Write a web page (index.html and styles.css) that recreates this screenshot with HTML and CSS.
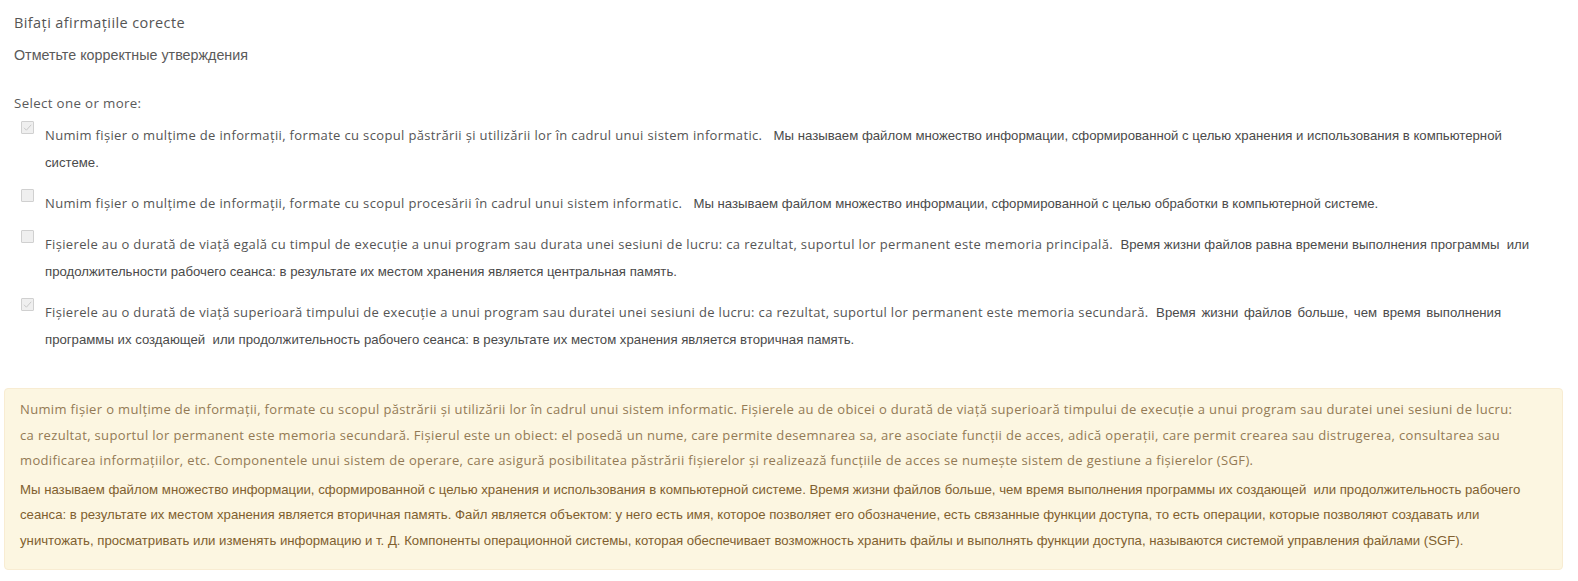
FILE: index.html
```html
<!DOCTYPE html>
<html lang="ro">
<head>
<meta charset="utf-8">
<title>Întrebare</title>
<link rel="stylesheet" href="styles.css">
</head>
<body>
<div class="question">
  <div class="qtext">
    <p class="qt-ro">Bifați afirmațiile corecte</p>
    <p class="qt-ru">Отметьте корректные утверждения</p>
  </div>
  <div class="prompt">Select one or more:</div>
  <div class="answers">
    <div class="option">
      <span class="check"><svg viewBox="0 0 13 13" width="13" height="13"><path d="M3 6.8 L5.4 9.2 L10.2 3.8" fill="none" stroke="#c9c9c9" stroke-width="1"/></svg></span>
      <div class="otext"><span class="ro">Numim fişier o mulţime de informaţii, formate cu scopul păstrării şi utilizării lor în cadrul unui sistem informatic.&nbsp;&nbsp; </span><span class="ru">Мы называем файлом множество информации, сформированной с целью хранения и использования в компьютерной</span><br><span class="ru">системе.</span></div>
    </div>
    <div class="option">
      <span class="check"></span>
      <div class="otext"><span class="ro">Numim fişier o mulţime de informaţii, formate cu scopul procesării în cadrul unui sistem informatic.&nbsp;&nbsp; </span><span class="ru">Мы называем файлом множество информации, сформированной с целью обработки в компьютерной системе.</span></div>
    </div>
    <div class="option">
      <span class="check"></span>
      <div class="otext"><span class="ro">Fişierele au o durată de viaţă egală cu timpul de execuţie a unui program sau durata unei sesiuni de lucru: ca rezultat, suportul lor permanent este memoria principală.&nbsp; </span><span class="ru">Время жизни файлов равна времени выполнения программы &nbsp;или</span><br><span class="ru">продолжительности рабочего сеанса: в результате их местом хранения является центральная память.</span></div>
    </div>
    <div class="option">
      <span class="check"><svg viewBox="0 0 13 13" width="13" height="13"><path d="M3 6.8 L5.4 9.2 L10.2 3.8" fill="none" stroke="#c9c9c9" stroke-width="1"/></svg></span>
      <div class="otext"><span class="ro">Fişierele au o durată de viaţă superioară timpului de execuţie a unui program sau duratei unei sesiuni de lucru: ca rezultat, suportul lor permanent este memoria secundară.&nbsp; </span><span class="ru wide">Время жизни файлов больше, чем время выполнения</span><br><span class="ru">программы их создающей &nbsp;или продолжительность рабочего сеанса: в результате их местом хранения является вторичная память.</span></div>
    </div>
  </div>
</div>
<div class="feedback">
  <p class="ro">Numim fişier o mulţime de informaţii, formate cu scopul păstrării şi utilizării lor în cadrul unui sistem informatic. Fişierele au de obicei o durată de viaţă superioară timpului de execuţie a unui program sau duratei unei sesiuni de lucru:<br>ca rezultat, suportul lor permanent este memoria secundară. Fişierul este un obiect: el posedă un nume, care permite desemnarea sa, are asociate funcţii de acces, adică operaţii, care permit crearea sau distrugerea, consultarea sau<br>modificarea informaţiilor, etc. Componentele unui sistem de operare, care asigură posibilitatea păstrării fişierelor şi realizează funcţiile de acces se numeşte sistem de gestiune a fişierelor (SGF).</p>
  <p class="ru">Мы называем файлом множество информации, сформированной с целью хранения и использования в компьютерной системе. Время жизни файлов больше, чем время выполнения программы их создающей &nbsp;или продолжительность рабочего<br>сеанса: в результате их местом хранения является вторичная память. Файл является объектом: у него есть имя, которое позволяет его обозначение, есть связанные функции доступа, то есть операции, которые позволяют создавать или<br>уничтожать, просматривать или изменять информацию и т. Д. Компоненты операционной системы, которая обеспечивает возможность хранить файлы и выполнять функции доступа, называются системой управления файлами (SGF).</p>
</div>
</body>
</html>
```
FILE: styles.css
```css
html, body {
  margin: 0;
  padding: 0;
  background: #ffffff;
}
body {
  font-family: "Open Sans", "Liberation Sans", sans-serif;
  color: #555555;
}
.ro {
  font-family: "Open Sans", "Liberation Sans", sans-serif;
  letter-spacing: 0.35px;
}
.ru {
  font-family: "Liberation Sans", Arial, sans-serif;
  letter-spacing: 0;
  font-size: 13.2px;
}
.ru.wide {
  word-spacing: 2px;
}
.question {
  padding: 13px 14px 0 14px;
}
.qtext p {
  margin: 0;
  line-height: 20px;
}
.qt-ro {
  font-family: "Open Sans", sans-serif;
  font-size: 14.5px;
  letter-spacing: 0.4px;
  color: #555555;
}
.qt-ru {
  margin-top: 12px !important;
  font-family: "Liberation Sans", Arial, sans-serif;
  font-size: 14.3px;
  color: #5a5a5a;
}
.prompt {
  margin-top: 28px;
  font-size: 13.3px;
  line-height: 20px;
  letter-spacing: 0.35px;
  color: #5a5a5a;
}
.answers {
  margin-top: 8px;
  display: flex;
  flex-direction: column;
  gap: 13px;
}
.option {
  display: flex;
  align-items: flex-start;
  gap: 11px;
  padding-left: 7px;
}
.check {
  flex: none;
  width: 11px;
  height: 11px;
  border: 1px solid #d0d0d0;
  background: #efefef;
  border-radius: 1px;
  position: relative;
}
.check svg {
  position: absolute;
  left: -1px;
  top: -1px;
}
.otext {
  margin-top: 1px;
  font-size: 13px;
  line-height: 26px;
}
.otext .ru {
  color: #4a4a4a;
}
.feedback {
  margin: 35px 15px 13px 4px;
  padding: 8px 15px 16px 15px;
  background: #fcf6e1;
  border: 1px solid #f8ecd2;
  border-radius: 4px;
  color: #8a6d3b;
  font-size: 13px;
  line-height: 25.5px;
}
.feedback p {
  margin: 0;
}
.feedback p + p {
  margin-top: 3px;
}
.feedback .ro {
  color: #937a55;
}
.feedback .ru {
  color: #80602f;
}
```
